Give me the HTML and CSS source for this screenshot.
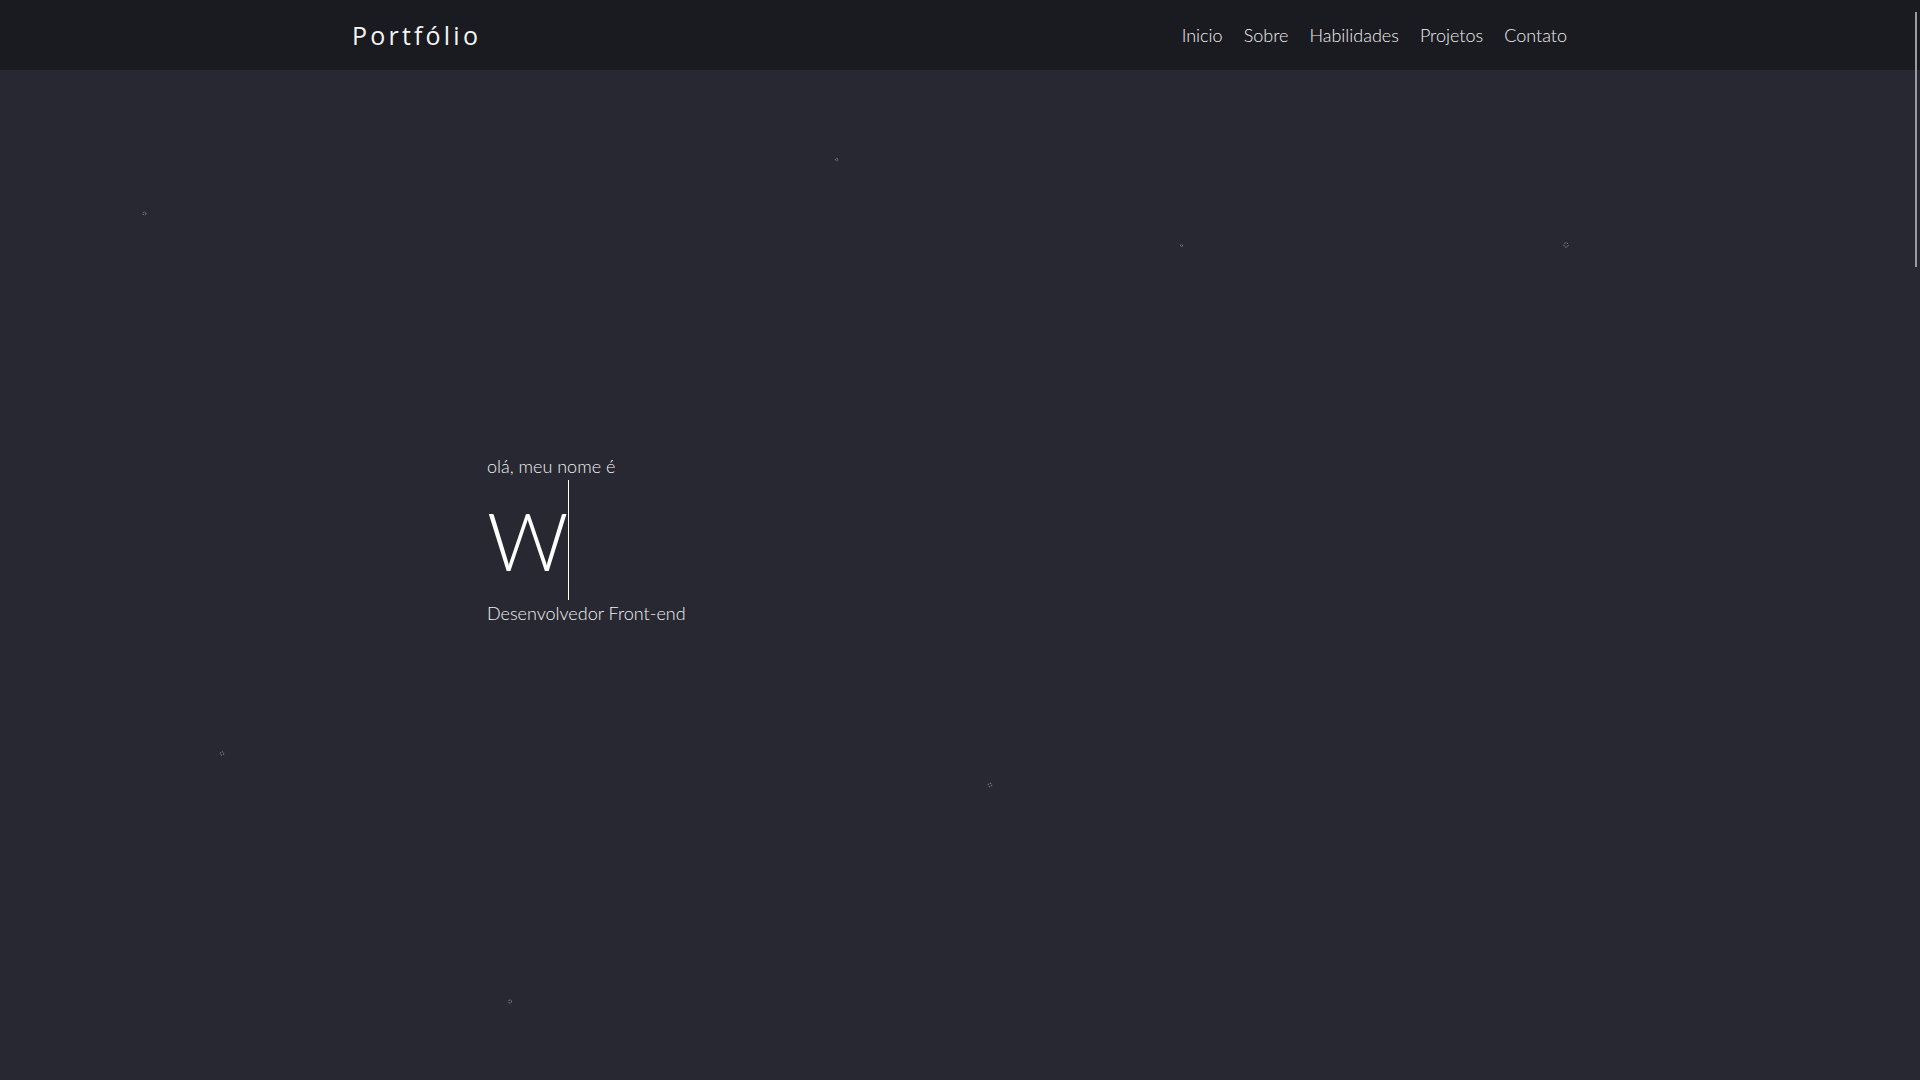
FILE: index.html
```html
<!DOCTYPE html>
<html lang="pt-BR">
<head>
<meta charset="utf-8">
<title>Portfólio</title>
<link rel="stylesheet" href="styles.css">
</head>
<body>
<header class="topbar">
  <div class="topbar-inner">
    <a class="logo" href="#inicio">Portfólio</a>
    <nav class="nav">
      <a href="#inicio">Inicio</a>
      <a href="#sobre">Sobre</a>
      <a href="#habilidades">Habilidades</a>
      <a href="#projetos">Projetos</a>
      <a href="#contato">Contato</a>
    </nav>
  </div>
</header>
<div class="scroll-thumb" aria-hidden="true"></div>

<main>
  <section class="hero" id="inicio">
    <svg class="particles" viewBox="0 0 1920 1080" width="1920" height="1080" aria-hidden="true">
      <g fill="none" stroke="#8a8b92" stroke-width="1" stroke-dasharray="1.5 1">
        <circle cx="144.5" cy="213.5" r="1.5"/>
        <circle cx="836.5" cy="159.5" r="1.2"/>
        <circle cx="1181.5" cy="245.5" r="1"/>
        <circle cx="1566" cy="245" r="2.2"/>
        <circle cx="222" cy="753.5" r="1.8"/>
        <circle cx="990" cy="785" r="1.8"/>
        <circle cx="510" cy="1001.5" r="1.6"/>
      </g>
    </svg>
    <div class="hero-content">
      <p class="hello">olá, meu nome é</p>
      <h1 class="name"><span class="typed">W</span></h1>
      <p class="role">Desenvolvedor Front-end</p>
    </div>
  </section>
  <section class="section" id="sobre"></section>
  <section class="section" id="habilidades"></section>
  <section class="section" id="projetos"></section>
  <section class="section" id="contato"></section>
</main>
</body>
</html>
```

FILE: styles.css
```css
* { box-sizing: border-box; }

html { background: #272831; }

html::-webkit-scrollbar { width: 0; height: 0; }

body {
  margin: 0;
  background: #272831;
  color: #ffffff;
  font-family: "Lato", "Open Sans", sans-serif;
  font-weight: 300;
}

a { color: inherit; text-decoration: none; }

.topbar {
  position: fixed;
  top: 0;
  left: 0;
  right: 0;
  height: 70px;
  background: #1a1b20;
  z-index: 10;
}

.scroll-thumb {
  position: fixed;
  top: 12px;
  right: 3px;
  width: 2px;
  height: 255px;
  background: #9a9ba0;
  z-index: 20;
}

.topbar-inner {
  width: 1216px;
  height: 100%;
  margin: 0 auto;
  display: flex;
  align-items: center;
  justify-content: space-between;
}

.logo {
  font-family: "Open Sans", sans-serif;
  font-weight: 400;
  font-size: 25px;
  letter-spacing: 3.2px;
  color: #f4f4f4;
}

.nav {
  display: flex;
  gap: 21px;
  font-size: 18px;
  font-weight: 300;
  color: #f0f0f0;
  padding-right: 1px;
}

.hero {
  position: relative;
  height: 1080px;
  display: flex;
  align-items: center;
  overflow: hidden;
}

.particles {
  position: absolute;
  top: 0;
  left: 0;
}

.hero-content {
  position: relative;
  width: 946px;
  margin: 0 auto;
}

.hello, .role {
  margin: 0;
  font-size: 18px;
  line-height: 27px;
  color: #f2f2f2;
}

.name {
  margin: 0;
  font-size: 80px;
  font-weight: 300;
  line-height: 120px;
}

.typed {
  display: inline-block;
  padding-right: 0;
  border-right: 1.5px solid #ffffff;
}

.section {
  min-height: 1050px;
}
```
